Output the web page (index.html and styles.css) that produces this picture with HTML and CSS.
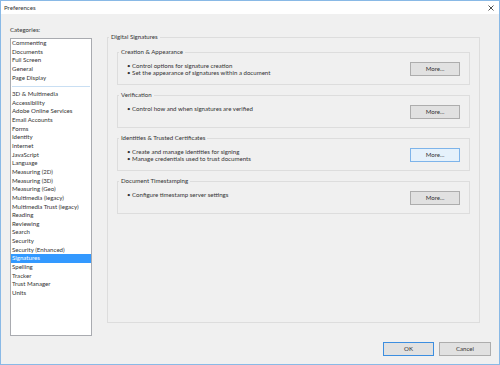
FILE: index.html
```html
<!DOCTYPE html>
<html>
<head>
<meta charset="utf-8">
<title>Preferences</title>
<link rel="stylesheet" href="styles.css">
</head>
<body>
<div class="window">
  <div class="titlebar">
    <span class="title">Preferences</span>
    <svg class="close" width="6" height="6" viewBox="0 0 6 6"><path d="M0.5 0.5 L5.5 5.5 M5.5 0.5 L0.5 5.5" stroke="#222" stroke-width="0.8" fill="none"/></svg>
  </div>
  <div class="main">
    <div class="left">
      <div class="cat-label">Categories:</div>
      <div class="listbox">
        <div class="item">Commenting</div>
        <div class="item">Documents</div>
        <div class="item">Full Screen</div>
        <div class="item">General</div>
        <div class="item">Page Display</div>
        <div class="sep"></div>
        <div class="item">3D &amp; Multimedia</div>
        <div class="item">Accessibility</div>
        <div class="item">Adobe Online Services</div>
        <div class="item">Email Accounts</div>
        <div class="item">Forms</div>
        <div class="item">Identity</div>
        <div class="item">Internet</div>
        <div class="item">JavaScript</div>
        <div class="item">Language</div>
        <div class="item">Measuring (2D)</div>
        <div class="item">Measuring (3D)</div>
        <div class="item">Measuring (Geo)</div>
        <div class="item">Multimedia (legacy)</div>
        <div class="item">Multimedia Trust (legacy)</div>
        <div class="item">Reading</div>
        <div class="item">Reviewing</div>
        <div class="item">Search</div>
        <div class="item">Security</div>
        <div class="item">Security (Enhanced)</div>
        <div class="item selected">Signatures</div>
        <div class="item">Spelling</div>
        <div class="item">Tracker</div>
        <div class="item">Trust Manager</div>
        <div class="item">Units</div>
      </div>
    </div>
    <fieldset class="outer">
      <legend class="outer-legend">Digital Signatures</legend>
      <fieldset class="group">
        <legend class="group-legend">Creation &amp; Appearance</legend>
        <div class="group-body">
          <div class="bullets">
            <div>• Control options for signature creation</div>
            <div>• Set the appearance of signatures within a document</div>
          </div>
          <button class="btn">More...</button>
        </div>
      </fieldset>
      <fieldset class="group">
        <legend class="group-legend">Verification</legend>
        <div class="group-body">
          <div class="bullets">
            <div>• Control how and when signatures are verified</div>
          </div>
          <button class="btn">More...</button>
        </div>
      </fieldset>
      <fieldset class="group">
        <legend class="group-legend">Identities &amp; Trusted Certificates</legend>
        <div class="group-body">
          <div class="bullets">
            <div>• Create and manage identities for signing</div>
            <div>• Manage credentials used to trust documents</div>
          </div>
          <button class="btn focus">More...</button>
        </div>
      </fieldset>
      <fieldset class="group">
        <legend class="group-legend">Document Timestamping</legend>
        <div class="group-body">
          <div class="bullets">
            <div>• Configure timestamp server settings</div>
          </div>
          <button class="btn">More...</button>
        </div>
      </fieldset>
    </fieldset>
  </div>
  <div class="footer">
    <button class="btn default">OK</button>
    <button class="btn">Cancel</button>
  </div>
</div>
</body>
</html>
```
FILE: styles.css
```css
* { box-sizing: border-box; }
html, body { margin: 0; padding: 0; background: #f0f0f0; }
body {
  font-family: Lato, "Noto Sans", sans-serif;
  font-size: 6.1px;
  color: #333333;
}
.window {
  width: 500px;
  height: 365px;
  border: 1px solid #89b9e6;
  background: #f0f0f0;
  display: flex;
  flex-direction: column;
}
.titlebar {
  height: 13px;
  background: #ffffff;
  display: flex;
  align-items: center;
  justify-content: space-between;
  padding: 0 5px 0 3px;
  flex: none;
}
.title { line-height: 8px; }
.close { display: block; }
.main {
  flex: 1;
  display: flex;
  align-items: flex-start;
  padding: 10px 19px 0 9px;
}
.left { width: 82px; flex: none; }
.cat-label { line-height: 9px; height: 9px; padding-top: 1px; }
.listbox {
  margin-top: 5px;
  height: 298px;
  background: #fff;
  border: 1px solid #a9abb0;
  padding-top: 0;
}
.item {
  height: 8.65px;
  line-height: 8.65px;
  padding-left: 1px;
  white-space: nowrap;
}
.item.selected { background: #3399ff; color: #fff; }
.sep {
  height: 8px;
  display: flex;
  align-items: center;
  padding: 0 1px;
}
.sep::before {
  content: "";
  display: block;
  width: 100%;
  height: 1px;
  background: #c9dff3;
}
fieldset { margin: 0; min-width: 0; }
.outer {
  flex: 1;
  margin-left: 15px;
  margin-top: 9px;
  height: 290px;
  border: 1px solid #dddddd;
  padding: 7px 9px 0 9px;
}
.outer-legend {
  line-height: 8px;
  padding: 0 2px;
  margin-left: -8px;
}
.group {
  border: 1px solid #dddddd;
  padding: 0;
  margin-bottom: 6px;
}
.group-legend {
  line-height: 8px;
  padding: 0 2px;
  margin-left: 1px;
}
.group-body {
  height: 28px;
  display: flex;
  justify-content: space-between;
  align-items: flex-start;
  padding: 6px 9px 0 9px;
}
.bullets { line-height: 7.3px; white-space: nowrap; }
.btn {
  font-family: inherit;
  font-size: 6.1px;
  color: #333333;
  width: 50px;
  height: 14px;
  padding: 0;
  margin: 0;
  background: #e1e1e1;
  border: 1px solid #adadad;
  border-radius: 0;
  line-height: 12px;
  flex: none;
}
.btn.focus { background: #e5f1fb; border-color: #7eb4ea; }
.btn.default { border-color: #3c8ee0; }
.footer {
  flex: none;
  display: flex;
  justify-content: flex-end;
  gap: 5px;
  padding: 0 8px 8px 0;
}
.footer .btn { width: 51px; }
.footer .btn + .btn { width: 52px; }
```
